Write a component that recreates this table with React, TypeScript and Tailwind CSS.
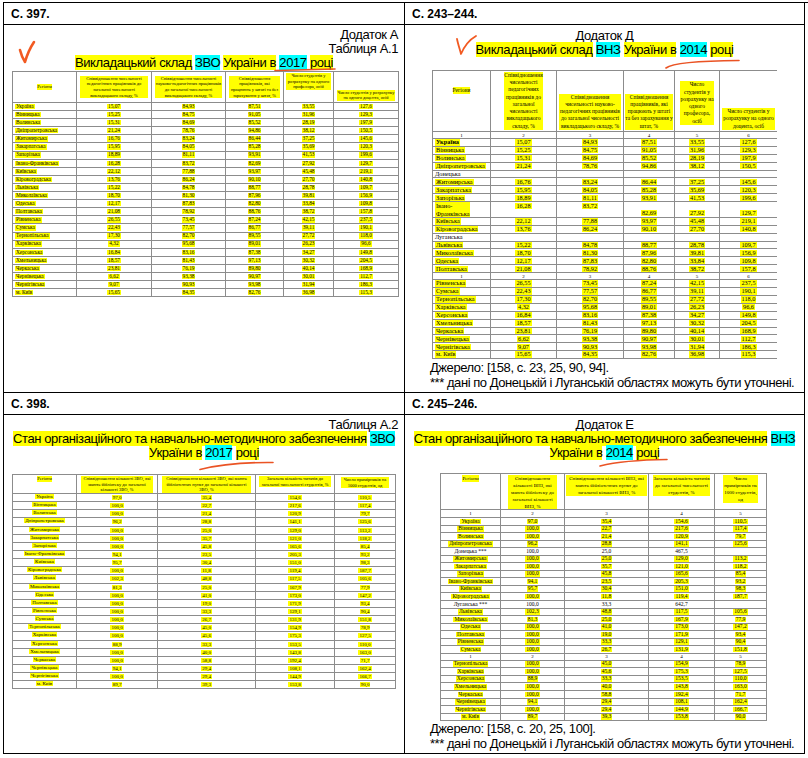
import React from 'react';

// ---------- shared bits ----------

const LINE = 'border-[#8c8c8c]';

function Hl({ children, cyan = false }: { children: React.ReactNode; cyan?: boolean }) {
  return <span className={cyan ? 'bg-[#00ffff]' : 'bg-[#ffff00]'}>{children}</span>;
}

function Mark({ children }: { children: React.ReactNode }) {
  return <span className="bg-[#ffff00] px-[1px]">{children}</span>;
}

interface Row {
  n: string;
  v: string[];
  plain?: boolean;
  bold?: boolean;
  tall?: boolean;
}

interface GridTableProps {
  cols: string;
  head: string[];
  headH: string;
  headCell: string[];
  headText: string;
  rows: Row[];
  rowH: string;
  tallH?: string;
  bodyText: string;
  nameCell: string;
  numH?: string;
  breakAt?: number;
  breakH?: string;
  openRight?: boolean;
}

function GridTable(p: GridTableProps) {
  const edge = p.openRight ? 'last:border-r-0' : '';
  const cell = `flex overflow-hidden whitespace-nowrap border-r ${LINE} ${edge}`;

  const numRow = (h: string, key: string) => (
    <div key={key} className={`grid ${p.cols} ${h} border-b ${LINE} text-[5px] leading-none`}>
      {p.head.map((_, i) => (
        <div key={i} className={`${cell} items-center justify-center`}>
          {i + 1}
        </div>
      ))}
    </div>
  );

  const dataRow = (r: Row, i: number) => (
    <div key={i} className={`grid ${p.cols} ${r.tall ? p.tallH : p.rowH} border-b ${LINE} leading-none`}>
      <div className={`${cell} ${p.nameCell} whitespace-pre-line ${r.tall ? 'leading-[8px]' : ''} ${r.bold ? 'font-bold' : ''}`}>
        {r.plain ? r.n : <Mark>{r.n}</Mark>}
      </div>
      {p.head.slice(1).map((_, j) => {
        const v = r.v[j] ?? '';
        const pos = r.tall ? (j < 2 ? 'items-start pt-[1px]' : 'items-end pb-[1px]') : 'items-center';
        return (
          <div key={j} className={`${cell} justify-center ${pos}`}>
            {r.plain || !v ? v : <Mark>{v}</Mark>}
          </div>
        );
      })}
    </div>
  );

  const body: React.ReactNode[] = [];
  p.rows.forEach((r, i) => {
    if (p.breakAt !== undefined && i === p.breakAt && p.breakH) body.push(numRow(p.breakH, 'break'));
    body.push(dataRow(r, i));
  });

  return (
    <div className={`w-fit border-l border-t ${LINE} font-['Liberation_Serif',serif] ${p.bodyText}`}>
      <div className={`grid ${p.cols} ${p.headH} border-b ${LINE}`}>
        {p.head.map((h, i) => (
          <div key={i} className={`flex overflow-hidden border-r ${LINE} ${edge} justify-center text-center ${p.headText} ${p.headCell[i]}`}>
            <span className="box-decoration-clone bg-[#ffff00]">{h}</span>
          </div>
        ))}
      </div>
      {p.numH && numRow(p.numH, 'num')}
      {body}
    </div>
  );
}

// ---------- data ----------

const staff: Row[] = [
  { n: 'Україна', v: ['15,07', '84,93', '87,51', '33,55', '127,6'], bold: true },
  { n: 'Вінницька', v: ['15,25', '84,75', '91,05', '31,96', '129,3'] },
  { n: 'Волинська', v: ['15,31', '84,69', '85,52', '28,19', '197,9'] },
  { n: 'Дніпропетровська', v: ['21,24', '78,76', '94,86', '38,12', '150,5'] },
  { n: 'Донецька', v: [], plain: true },
  { n: 'Житомирська', v: ['16,76', '83,24', '86,44', '37,25', '145,6'] },
  { n: 'Закарпатська', v: ['15,95', '84,05', '85,28', '35,69', '120,3'] },
  { n: 'Запорізька', v: ['18,89', '81,11', '93,91', '41,53', '199,6'] },
  { n: 'Івано-\nФранківська', v: ['16,28', '83,72', '82,69', '27,92', '129,7'], tall: true },
  { n: 'Київська', v: ['22,12', '77,88', '93,97', '45,48', '219,1'] },
  { n: 'Кіровоградська', v: ['13,76', '86,24', '90,10', '27,70', '140,8'] },
  { n: 'Луганська', v: [], plain: true },
  { n: 'Львівська', v: ['15,22', '84,78', '88,77', '28,78', '109,7'] },
  { n: 'Миколаївська', v: ['18,70', '81,30', '87,96', '39,81', '156,9'] },
  { n: 'Одеська', v: ['12,17', '87,83', '82,80', '33,84', '109,8'] },
  { n: 'Полтавська', v: ['21,08', '78,92', '88,76', '38,72', '157,8'] },
  { n: 'Рівненська', v: ['26,55', '73,45', '87,24', '42,15', '237,5'] },
  { n: 'Сумська', v: ['22,43', '77,57', '86,77', '39,11', '190,1'] },
  { n: 'Тернопільська', v: ['17,30', '82,70', '89,55', '27,72', '118,0'] },
  { n: 'Харківська', v: ['4,32', '95,68', '89,01', '26,23', '96,6'] },
  { n: 'Херсонська', v: ['16,84', '83,16', '87,38', '34,27', '149,8'] },
  { n: 'Хмельницька', v: ['18,57', '81,43', '97,13', '30,32', '204,5'] },
  { n: 'Черкаська', v: ['23,81', '76,19', '89,80', '40,14', '168,9'] },
  { n: 'Чернівецька', v: ['6,62', '93,38', '90,97', '30,01', '112,7'] },
  { n: 'Чернігівська', v: ['9,07', '90,93', '93,98', '31,94', '186,3'] },
  { n: 'м. Київ', v: ['15,65', '84,35', '82,76', '36,98', '115,3'] },
];

const staff2017: Row[] = staff
  .filter((r) => !r.plain)
  .map((r) => ({ ...r, n: r.n.replace('\n', ''), tall: false, bold: false }));

const libs: Row[] = [
  { n: 'Україна', v: ['97,0', '35,4', '154,6', '110,5'] },
  { n: 'Вінницька', v: ['100,0', '22,7', '217,6', '117,4'] },
  { n: 'Волинська', v: ['100,0', '21,4', '120,9', '79,7'] },
  { n: 'Дніпропетровська', v: ['96,2', '28,8', '141,1', '125,6'] },
  { n: 'Донецька ***', v: ['100,0', '25,0', '467,5', ''], plain: true },
  { n: 'Житомирська', v: ['100,0', '25,0', '129,0', '113,2'] },
  { n: 'Закарпатська', v: ['100,0', '35,7', '121,0', '118,2'] },
  { n: 'Запорізька', v: ['100,0', '45,8', '165,6', '85,4'] },
  { n: 'Івано-Франківська', v: ['94,1', '23,5', '205,3', '93,2'] },
  { n: 'Київська', v: ['95,7', '30,4', '151,0', '98,3'] },
  { n: 'Кіровоградська', v: ['100,0', '11,8', '119,4', '187,7'] },
  { n: 'Луганська ***', v: ['100,0', '33,3', '642,7', ''], plain: true },
  { n: 'Львівська', v: ['102,3', '48,8', '117,5', '105,6'] },
  { n: 'Миколаївська', v: ['81,3', '25,0', '167,9', '77,9'] },
  { n: 'Одеська', v: ['100,0', '41,0', '173,0', '147,2'] },
  { n: 'Полтавська', v: ['100,0', '19,0', '171,9', '93,4'] },
  { n: 'Рівненська', v: ['100,0', '33,3', '129,1', '90,4'] },
  { n: 'Сумська', v: ['100,0', '26,7', '131,9', '151,8'] },
  { n: 'Тернопільська', v: ['100,0', '45,0', '154,9', '78,9'] },
  { n: 'Харківська', v: ['100,0', '45,6', '175,3', '127,5'] },
  { n: 'Херсонська', v: ['88,9', '33,3', '153,5', '110,0'] },
  { n: 'Хмельницька', v: ['100,0', '40,0', '143,8', '163,0'] },
  { n: 'Черкаська', v: ['100,0', '58,8', '192,4', '71,7'] },
  { n: 'Чернівецька', v: ['94,1', '29,4', '108,1', '162,4'] },
  { n: 'Чернігівська', v: ['100,0', '29,4', '144,9', '166,7'] },
  { n: 'м. Київ', v: ['89,7', '39,3', '153,8', '90,0'] },
];

const libs2017: Row[] = libs.filter((r) => !r.plain);

const staffHead = [
  'Регіони',
  'Співвідношення чисельності педагогічних працівників до загальної чисельності викладацького складу, %',
  'Співвідношення чисельності науково-педагогічних працівників до загальної чисельності викладацького складу, %',
  'Співвідношення працівників, які працюють у штаті та без зарахування у штат, %',
  'Число студентів у розрахунку на одного професора, осіб',
  'Число студентів у розрахунку на одного доцента, осіб',
];

const libsHead = (kind: string) => [
  'Регіони',
  `Співвідношення кількості ${kind}, які мають бібліотеку до загальної кількості ${kind}, %`,
  `Співвідношення кількості ${kind}, які мають бібліотечних пункт до загальної кількості ${kind}, %`,
  'Загальна кількість читачів до загальної чисельності студентів, %',
  'Число примірників на 1000 студентів, од',
];

// ---------- annotations ----------

function Tick({ className, d, w }: { className: string; d: string; w: number }) {
  return (
    <svg className={className} width="24" height="26" viewBox="0 0 24 26" fill="none">
      <path d={d} stroke="#f25a22" strokeWidth={w} strokeLinecap="round" strokeLinejoin="round" />
    </svg>
  );
}

function Stroke({ className, d, w, h }: { className: string; d: string; w: number; h: number }) {
  return (
    <svg className={className} width={w} height={h} viewBox={`0 0 ${w} ${h}`} fill="none">
      <path d={d} stroke="#ea5324" strokeWidth="1.6" strokeLinecap="round" />
    </svg>
  );
}

function Head({ children }: { children: React.ReactNode }) {
  return (
    <div className="flex items-center border-r border-b border-black pl-[7px] text-[12px] font-bold">
      {children}
    </div>
  );
}

function Note({ source }: { source: string }) {
  return (
    <div className="whitespace-nowrap pl-[25px] text-[13px] leading-[15px] tracking-[-0.45px]">
      <p>{source}</p>
      <p>*** дані по Донецькій і Луганській областях можуть бути уточнені.</p>
    </div>
  );
}

// ---------- page ----------

export default function App() {
  return (
    <div className="h-[758px] w-[808px] bg-white pl-[3px] pt-[2px] font-['Liberation_Sans',Arial,sans-serif] text-black">
      <div className="grid grid-cols-[401px_400px] grid-rows-[22px_368px_22px_339px] border-l border-t border-black">
        <Head>С. 397.</Head>
        <Head>С. 243–244.</Head>

        {/* 2017 — викладацький склад */}
        <div className="relative border-r border-b border-black pt-[3px] text-[13px] leading-[14px] tracking-[-0.4px]">
          <div className="pr-[6px] text-right">
            Додаток А
            <br />
            Таблиця А.1
          </div>
          <p className="text-center">
            <Hl>Викладацький склад</Hl> <Hl cyan>ЗВО</Hl> <Hl>України в</Hl> <Hl cyan>2017</Hl> <Hl>році</Hl>
          </p>
          <div className="ml-[8px] mt-[1px] tracking-normal">
            <GridTable
              cols="grid-cols-[64px_75px_74px_58px_50px_65px]"
              head={staffHead}
              headH="h-[31px]"
              headCell={['items-center px-[2px]', 'items-center px-[3px]', 'items-center px-[3px]', 'items-center px-[3px]', 'items-start pt-[1px] px-[2px]', 'items-end pb-[1px] px-[3px]']}
              headText="text-[4.5px] leading-[5.6px]"
              rows={staff2017}
              rowH="h-[8.1px]"
              bodyText="text-[5.3px]"
              nameCell="items-center justify-start pl-[2px]"
            />
          </div>
          <Tick className="absolute left-[14px] top-[15px]" d="M2 10 C3 14 5 19 7 22 C9 15 12 8 16 2" w={2.6} />
          <Stroke className="absolute left-[270px] top-[42px]" d="M1 3.5 L61 2" w={63} h={6} />
        </div>

        {/* 2014 — викладацький склад */}
        <div className="relative border-r border-b border-black pt-[4px] text-[13px] leading-[14px] tracking-[-0.4px]">
          <p className="text-center">Додаток Д</p>
          <p className="text-center">
            <Hl>Викладацький склад</Hl> <Hl cyan>ВНЗ</Hl> <Hl>України в</Hl> <Hl cyan>2014</Hl> <Hl>році</Hl>
          </p>
          <div className="ml-[27px] mt-[13px] tracking-normal">
            <GridTable
              cols="grid-cols-[58px_66px_67px_51px_45px_57px]"
              head={staffHead}
              headH="h-[61px]"
              headCell={['items-start pt-[16px]', 'items-end pb-[1px] px-[15px]', 'items-end pb-[1px] px-[2px]', 'items-end pb-[1px] px-[1px]', 'items-end pb-[6px] px-[5px]', 'items-end pb-[1px] px-[2px]']}
              headText="text-[5.5px] leading-[7.3px]"
              rows={staff}
              rowH="h-[7.9px]"
              tallH="h-[15.8px]"
              bodyText="text-[6.3px]"
              nameCell="items-center justify-start pl-[2px]"
              numH="h-[7px]"
              breakAt={16}
              breakH="h-[7px]"
              openRight
            />
          </div>
          <div className="mt-[1px]">
            <Note source="Джерело: [158, с. 23, 25, 90, 94]." />
          </div>
          <Tick className="absolute left-[49px] top-[8px]" d="M3 6 C4 11 6 17 7 21 C10 14 15 7 22 3" w={1.8} />
          <Stroke className="absolute left-[260px] top-[34px]" d="M1 9 Q10 2 74 1.5" w={76} h={11} />
        </div>

        <Head>С. 398.</Head>
        <Head>С. 245–246.</Head>

        {/* 2017 — бібліотеки */}
        <div className="relative border-r border-b border-black pt-[3px] text-[13px] leading-[14px] tracking-[-0.4px]">
          <div className="pr-[6px] text-right">Таблиця А.2</div>
          <p className="text-center">
            <Hl>Стан організаційного та навчально-методичного забезпечення</Hl> <Hl cyan>ЗВО</Hl>
            <br />
            <Hl>України в</Hl> <Hl cyan>2017</Hl> <Hl>році</Hl>
          </p>
          <div className="ml-[8px] mt-[14px] tracking-normal">
            <GridTable
              cols="grid-cols-[64px_81px_98px_79px_61px]"
              head={libsHead('ЗВО')}
              headH="h-[19px]"
              headCell={['items-start pt-[1px]', 'items-start pt-[1px] px-[4px]', 'items-start pt-[1px] px-[4px]', 'items-start pt-[1px] px-[3px]', 'items-start pt-[2px] px-[6px]']}
              headText="text-[4.5px] leading-[5.5px]"
              rows={libs2017}
              rowH="h-[8.15px]"
              bodyText="text-[5px]"
              nameCell="items-start justify-center"
            />
          </div>
          <Stroke className="absolute left-[195px] top-[46px]" d="M1 8.5 Q30 1 74 1.5" w={76} h={10} />
        </div>

        {/* 2014 — бібліотеки */}
        <div className="relative border-r border-b border-black pt-[3px] text-[13px] leading-[14px] tracking-[-0.4px]">
          <p className="text-center">Додаток Е</p>
          <p className="text-center">
            <Hl>Стан організаційного та навчально-методичного забезпечення</Hl> <Hl cyan>ВНЗ</Hl>
            <br />
            <Hl>України в</Hl> <Hl cyan>2014</Hl> <Hl>році</Hl>
          </p>
          <div className="ml-[35px] mt-[13px] tracking-normal">
            <GridTable
              cols="grid-cols-[60px_64px_84px_66px_52px]"
              head={libsHead('ВНЗ')}
              headH="h-[36px]"
              headCell={['items-start pt-[1px]', 'items-start pt-[1px] px-[7px]', 'items-start pt-[1px] px-[1px]', 'items-start pt-[1px] px-[4px]', 'items-start pt-[1px] px-[8px]']}
              headText="text-[5px] leading-[7px]"
              rows={libs}
              rowH="h-[7.55px]"
              bodyText="text-[5.5px]"
              nameCell="items-center justify-center"
              numH="h-[8px]"
              breakAt={18}
              breakH="h-[7px]"
            />
          </div>
          <Note source="Джерело: [158, с. 20, 25, 100]." />
          <Stroke className="absolute left-[194px] top-[43px]" d="M1 8 Q25 2 68 1.5" w={70} h={10} />
        </div>
      </div>
    </div>
  );
}
